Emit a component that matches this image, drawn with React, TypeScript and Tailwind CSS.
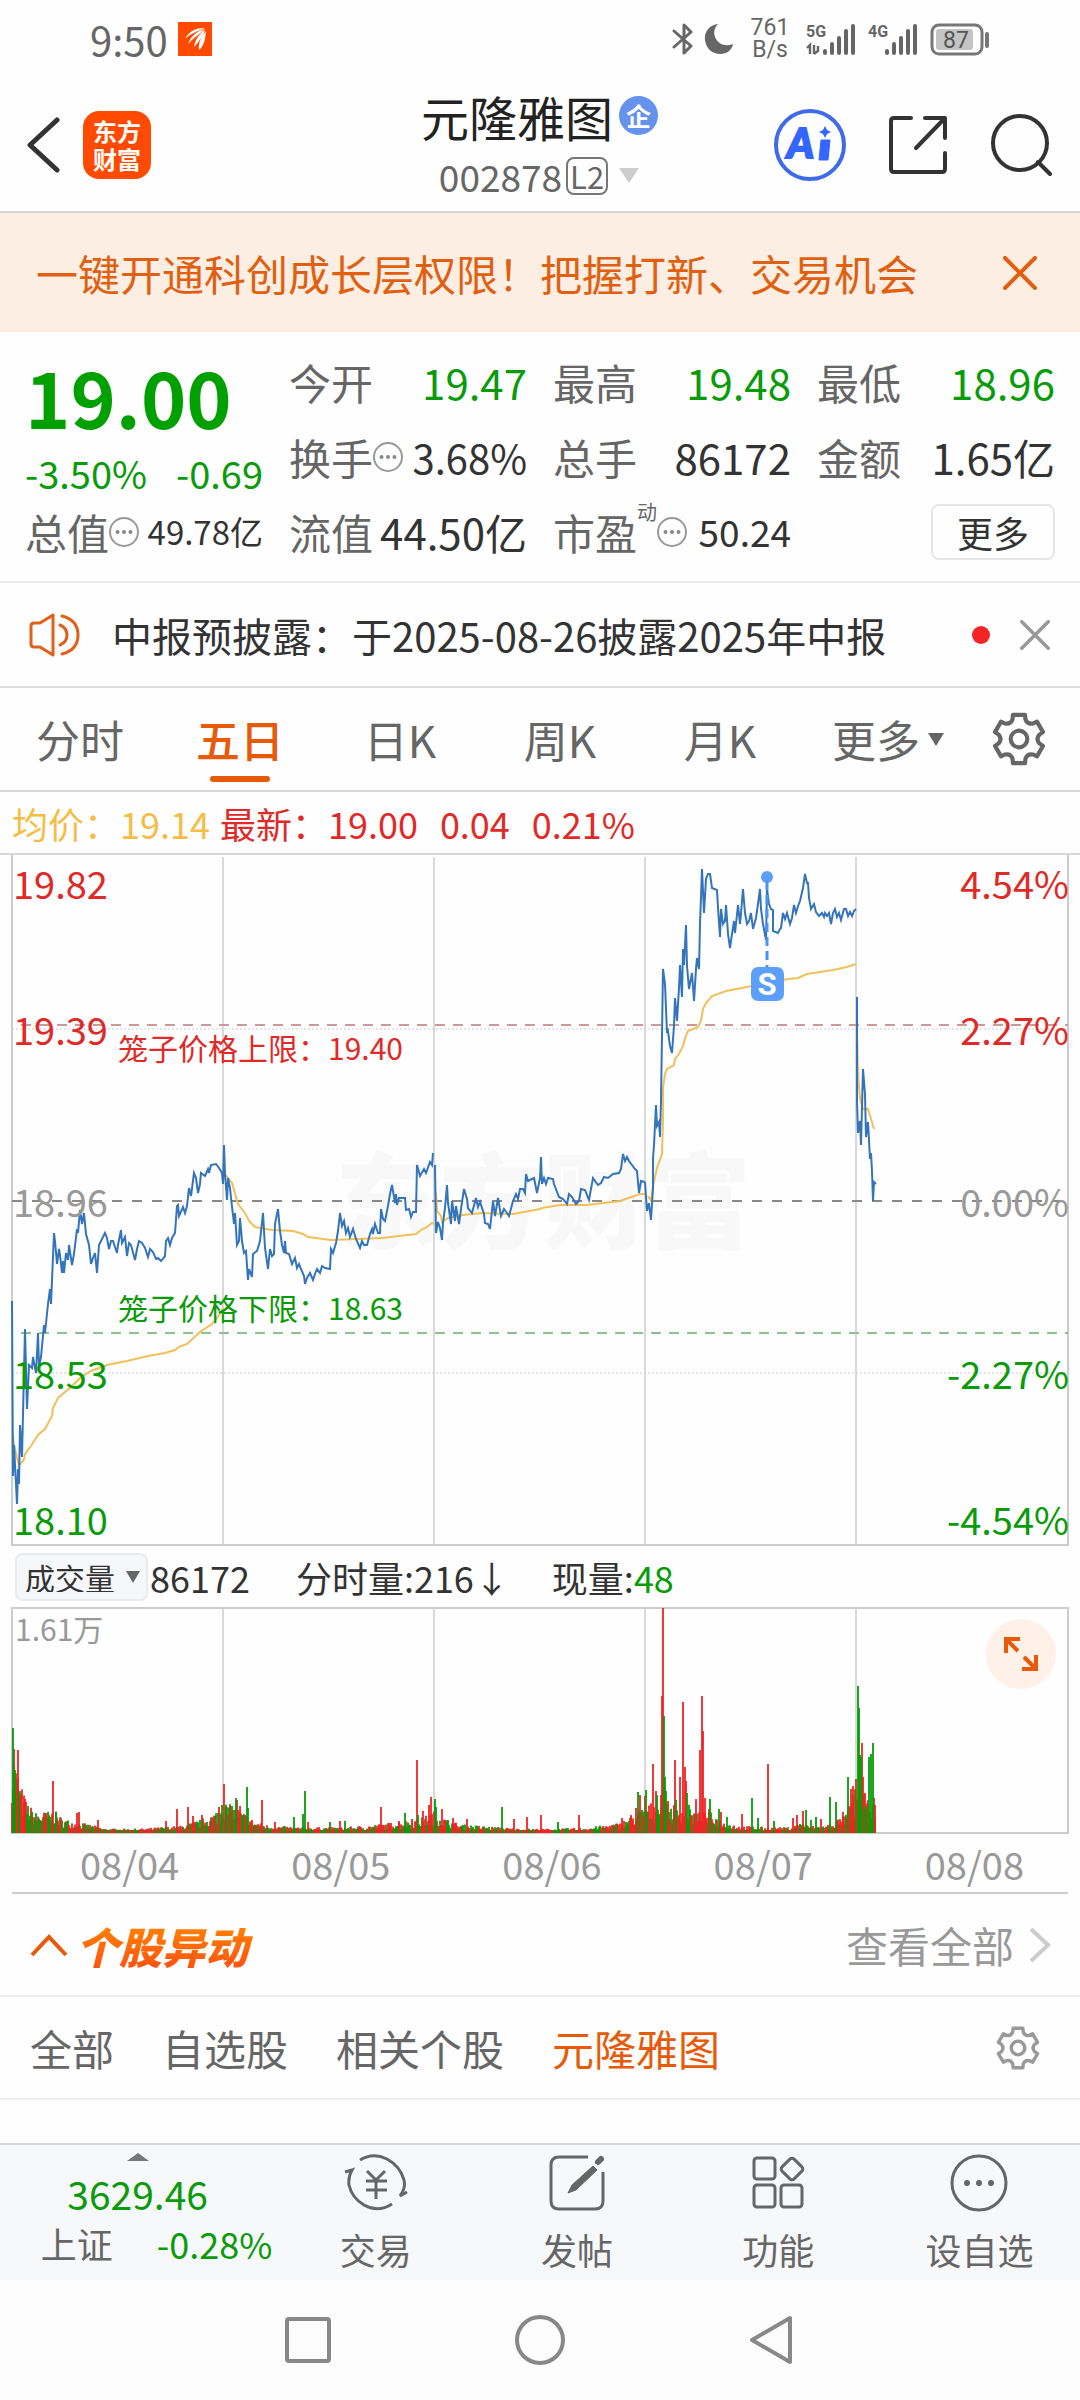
import { useState } from "react";

type Tone = "red" | "green";

const priceLine: string[] = [
  "12,446 13,621 14,590 17,649 18,614 19,629 20,570 22,602 25,474 27,554 29,510 32,513 33,502 36,518 38,478 39,511 41,502 44,470 45,478 48,449 50,434 51,449 54,378 55,386 57,409 59,394 60,400 62,418 63,406 64,418 66,398 68,405 69,390 72,410 74,399 77,374 78,378 80,355 82,369 84,358 86,379 89,390 91,409 93,403 95,398 97,418 99,390 101,386 105,378 107,383 109,394 111,386 113,386 117,398 118,390 121,375 122,388 125,382 127,401 129,388 131,390 135,405 137,394 139,386 142,388 145,393 148,402 150,394 153,397 156,404 158,403 161,406 165,401 166,386 168,383 170,390 172,383 175,378 177,351 178,350 179,361 183,352 185,358 187,351 189,333 191,341 194,318 196,323 198,338 200,329 201,318 205,321 208,314 209,318 211,310 216,309 219,313 222,318 223,329",
  "223,329 224,290 225,319 227,345 228,323 230,333 231,343 234,369 235,358 237,390 239,386 240,363 242,386 244,398 246,396 248,425 249,414 252,422 253,399 257,396 260,386 263,358 265,393 268,414 270,394 272,401 274,399 275,369 278,354 280,376 282,390 284,398 285,386 286,398 289,399 292,409 295,403 297,413 299,409 301,414 304,421 305,429 307,423 310,418 313,425 315,419 317,414 320,418 322,411 325,413 330,414 331,394 333,398 336,388 338,376 340,358 342,371 344,366 346,378 348,373 350,382 353,374 356,384 360,393 362,386 364,390 367,390 370,379 372,374 373,379 375,369 378,378 380,378 381,354 383,364 385,366 388,351 390,339 392,330 395,348 396,339 397,350 399,343 405,343 406,355 409,354 411,362 413,357 416,357 417,310 420,321 424,314 426,318 430,307 432,310 433,298",
  "435,310 436,378 438,367 440,373 442,385 443,368 445,353 447,330 448,348 451,369 452,346 455,366 456,351 459,369 461,354 464,334 467,344 468,353 472,358 476,343 478,352 480,347 484,359 485,368 488,369 490,374 493,346 495,361 498,343 501,361 504,354 507,358 509,361 513,346 516,339 518,344 520,334 523,334 525,338 526,319 528,326 534,323 537,338 540,323 541,302 542,329 544,323 546,329 548,323 553,324 554,329 559,342 563,344 567,349 569,339 572,342 576,349 579,346 581,334 585,335 589,345 593,323 595,326 598,330 601,328 604,322 608,323 613,319 619,318 621,314 623,299 625,306 627,302 629,306 632,310 635,314 637,316 639,338 641,326 645,327",
  "645,327 647,356 649,348 651,365 653,333 653,303 654,290 656,250 657,271 659,267 660,282 661,246 663,114 665,129 667,178 668,176 670,191 672,198 674,171 675,143 677,166 679,133 680,110 682,142 683,94 684,110 686,70 687,111 689,134 692,118 694,146 696,114 697,103 699,114 700,69 702,14 704,58 706,24 708,19 710,19 712,33 717,35 718,53 720,82 721,54 723,69 725,66 726,50 728,79 730,93 732,79 734,66 735,78 738,50 740,69 741,58 743,34 745,58 747,69 749,66 751,58 753,74 756,63 758,49 760,34 761,54 763,69 766,85 767,34 769,49 771,54 773,55 773,76 778,78 780,74 781,73 783,58 785,64 787,58 790,69 792,63 794,50 796,58 798,51 800,46 803,33 805,19 807,28 808,28 809,43 811,54 814,49 816,57 819,61 822,58 824,62 825,58 827,61 829,58 831,69 833,58 835,54 837,62 839,58 841,65 844,54 846,54 848,61 850,57 852,61 854,56 856,54",
  "857,142 857,246 858,278 860,266 861,290 863,214 865,239 866,282 868,267 870,304 871,298 872,316 873,346 874,327 876,329",
];

const averageLine: string[] = [
  "13,580 14,590 19,611 24,604 25,599 31,591 38,580 45,574 52,561 53,553 58,543 71,532 80,523 91,516 107,510 127,506 148,501 165,498 175,495 179,492 187,489 200,477 212,469 220,459 223,453",
  "224,318 232,328 238,349 245,358 249,366 255,372 272,375 293,376 303,379 308,382 331,385 382,383 416,379 421,375 427,372 432,368 434,369",
  "436,338 437,356 441,361 442,367 448,363 463,360 482,358 513,359 540,354 542,353 560,350 587,350 620,346 640,339 645,339",
  "648,341 651,346 653,331 657,313 662,299 663,266 663,233 665,219 667,214 674,210 675,204 679,199 683,191 685,183 688,176 698,172 701,166 703,154 706,148 712,141 726,136 747,132 767,128 788,124 798,123 807,119 833,115 847,112 856,109",
  "857,173 858,219 860,243 863,254 868,254 871,264 874,274",
];

// typical trading volume over time, [x, height]
const volumeBase: number[][] = [
  [12, 60], [20, 35], [26, 22], [35, 14], [55, 15], [62, 10], [75, 8], [95, 5],
  [105, 3], [140, 3], [160, 4], [180, 5], [200, 9], [215, 14], [222, 22],
  [240, 16], [255, 8], [270, 5], [300, 4], [340, 4], [365, 5], [390, 7],
  [420, 10], [435, 15], [445, 10], [460, 6], [480, 5], [520, 3], [560, 3],
  [590, 4], [620, 7], [640, 16], [655, 22], [665, 20], [680, 18], [700, 14],
  [712, 14], [722, 8], [740, 5], [770, 4], [790, 4], [803, 8], [808, 5],
  [825, 5], [845, 12], [855, 30], [863, 30], [868, 22], [875, 24],
];

const redPeaks =
  "14,84 18,83 24,30 25,34 46,20 53,52 77,20 79,21 98,13 166,12 177,24 188,26 193,17 202,18 219,26 224,49 230,27 237,33 240,27 262,33 275,11 308,11 340,12 381,26 399,12 412,14 417,73 423,22 429,28 431,36 442,24 453,15 467,14 514,14 527,16 541,18 579,18 622,15 631,18 636,25 640,38 645,37 653,69 656,42 661,38 662,137 663,225 668,32 674,28 675,73 680,56 683,131 685,66 686,52 696,34 700,83 702,137 703,102 705,35 709,24 721,21 742,19 768,69 793,15 797,18 803,22 821,14 843,21 851,44 853,47 856,54 862,90 863,56 875,28";
const greenPeaks =
  "13,105 15,63 19,40 32,21 56,21 222,28 226,26 232,27 236,35 247,46 248,25 294,16 303,19 305,42 330,11 345,12 405,20 418,18 435,34 436,26 502,26 558,11 638,41 646,43 657,38 664,117 665,56 666,42 676,33 687,40 689,28 710,34 719,24 727,16 752,35 758,15 774,12 806,23 811,13 816,16 830,36 836,31 848,56 858,147 859,125 860,78 861,76 864,24 866,27 869,76 871,79 873,90";

const parsePeaks = (list: string, tone: Tone) =>
  list.split(" ").map((item) => {
    const [x, h] = item.split(",").map(Number);
    return { x, h, tone };
  });

const baseHeight = (x: number) => {
  const i = volumeBase.findIndex((p) => p[0] >= x);
  if (i <= 0) return volumeBase[0][1];
  const [x0, h0] = volumeBase[i - 1];
  const [x1, h1] = volumeBase[i];
  return h0 + ((h1 - h0) * (x - x0)) / (x1 - x0);
};

const buildVolume = () => {
  const bars: { x: number; h: number; tone: Tone }[] = [];
  let seed = 7;
  const next = () => {
    seed = (seed * 16807) % 2147483647;
    return seed / 2147483647;
  };
  for (let x = 12; x <= 875; x++) {
    const h = Math.max(3, baseHeight(x) * (0.5 + next()));
    bars.push({ x, h, tone: next() > 0.45 ? "red" : "green" });
  }
  return [
    ...bars,
    ...parsePeaks(redPeaks, "red"),
    ...parsePeaks(greenPeaks, "green"),
  ];
};

const volumeBars = buildVolume();

const gearPath = () => {
  const at = (deg: number, r: number) => {
    const a = (deg * Math.PI) / 180;
    return `${(26 + r * Math.cos(a)).toFixed(1)} ${(26 + r * Math.sin(a)).toFixed(1)}`;
  };
  let d = "";
  for (let k = 0; k < 6; k++) {
    const c = -90 + k * 60;
    d += `${k === 0 ? "M" : "L"}${at(c - 14, 24)} L${at(c + 14, 24)} L${at(c + 18, 20)} Q${at(c + 30, 16)} ${at(c + 42, 20)} `;
  }
  return d + "Z";
};

const Gear = ({ className, width }: { className: string; width: number }) => (
  <svg viewBox="0 0 52 52" className={className} fill="none" stroke="currentColor" strokeWidth={width} strokeLinejoin="round">
    <path d={gearPath()} />
    <circle cx="26" cy="26" r="8" />
  </svg>
);

const Cross = ({ className }: { className: string }) => (
  <svg viewBox="0 0 34 34" className={className} stroke="currentColor" strokeWidth="4" strokeLinecap="round">
    <path d="M2 2 32 32M32 2 2 32" />
  </svg>
);

const Dots = () => (
  <svg viewBox="0 0 30 30" className="h-[30px] w-[30px] shrink-0" fill="none" stroke="#999" strokeWidth="2">
    <circle cx="15" cy="15" r="14" />
    <g fill="#888" stroke="none">
      <circle cx="8.500" cy="15" r="2" />
      <circle cx="15" cy="15" r="2" />
      <circle cx="21.500" cy="15" r="2" />
    </g>
  </svg>
);

const Signal = ({ label, data }: { label: string; data?: boolean }) => (
  <svg viewBox="0 0 50 34" className="h-[34px] w-[50px]">
    <text x="0" y="15" fontSize="16" fontWeight="700" fontFamily="Liberation Sans Narrow, Roboto, sans-serif" fill="#666">
      {label}
    </text>
    {data && (
      <path d="M1 26 4 23V32M8 23v9M12 24v5l-4 3" stroke="#666" strokeWidth="2.400" fill="none" />
    )}
    <path d="M19 29v2M26 22v9M33 16v15M40 9v22M47 4v27" stroke="#666" strokeWidth="4" strokeLinecap="round" />
  </svg>
);

const StatusBar = () => (
  <div className="flex h-[78px] items-center justify-between pl-[90px] pr-[90px] text-[#666]">
    <div className="flex items-center gap-2.5">
      <span className="text-[40px] leading-none">9:50</span>
      <svg viewBox="0 0 34 34" className="h-[34px] w-[34px]">
        <rect width="34" height="34" fill="#ff4a00" />
        <path d="M7 17C11 9 18 6 27 6 20 9 12 12 7 17ZM10 22C13 14 19 9 27 7 21 13 15 16 10 22ZM16 25C17 18 21 12 27 8 24 15 21 20 16 25ZM21 28C20 20 24 13 28 9 27 18 26 24 21 28Z" fill="#fff" />
      </svg>
    </div>
    <div className="flex items-center">
      <svg viewBox="0 0 22 34" className="h-[34px] w-[22px]" fill="none" stroke="#666" strokeWidth="3" strokeLinejoin="round" strokeLinecap="round">
        <path d="M2 9 19 24 12 31V3L19 10 2 25" />
      </svg>
      <svg viewBox="0 0 30 32" className="ml-2.5 h-[32px] w-[30px]">
        <path d="M13 1C4 3 0 10 1 17 2 26 9 31 16 31 23 31 28 27 29 21 21 24 15 21 12 16 9 11 10 5 14 1Z" fill="#666" />
      </svg>
      <div className="ml-4 w-[40px] text-center font-[Roboto,sans-serif] text-[23px] leading-[22px]">
        761
        <br />
        B/s
      </div>
      <div className="ml-4 flex gap-3">
        <Signal label="5G" data />
        <Signal label="4G" />
      </div>
      <svg viewBox="0 0 60 34" className="ml-3 h-[34px] w-[60px]">
        <rect x="2" y="3" width="50" height="29" rx="7" fill="none" stroke="#777" strokeWidth="3" />
        <rect x="6" y="7" width="37" height="21" rx="3" fill="#c4c4c4" />
        <text x="26" y="26" fontSize="23" textAnchor="middle" fontFamily="Roboto, sans-serif" fill="#555">
          87
        </text>
        <rect x="55" y="10" width="4" height="16" rx="2" fill="#777" />
      </svg>
    </div>
  </div>
);

const Header = () => (
  <header className="grid h-[135px] grid-cols-[1fr_auto_1fr] items-center border-b-2 border-[#d8d8d8] pl-[27px] pr-[28px]">
    <div className="flex items-center gap-5">
      <button aria-label="返回">
        <svg viewBox="0 0 36 56" className="h-[56px] w-[36px]" fill="none" stroke="#333" strokeWidth="5" strokeLinecap="round" strokeLinejoin="round">
          <path d="M30 3 3 28 30 53" />
        </svg>
      </button>
      <div className="h-[68px] w-[68px] rounded-2xl bg-[#ff4a00] pt-1.5 text-center text-[24px] font-bold leading-[28px] text-white">
        东方
        <br />
        财富
      </div>
    </div>
    <div className="flex flex-col items-center">
      <div className="flex items-center gap-1.5">
        <h1 className="text-[48px] leading-[60px] text-[#222]">元隆雅图</h1>
        <span className="flex h-[39px] w-[39px] items-center justify-center rounded-full bg-[#6592ec] text-[25px] font-bold leading-none text-white">
          企
        </span>
      </div>
      <div className="flex items-center pt-0.5 text-[37px] leading-[56px] text-[#666]">
        <span>002878</span>
        <span className="ml-1 rounded-lg border-2 border-[#777] px-0.5 text-[31px] leading-[34px]">L2</span>
        <svg viewBox="0 0 22 15" className="ml-2.5 h-[15px] w-[22px]">
          <path d="M1 0H21L11 15Z" fill="#ccc" />
        </svg>
      </div>
    </div>
    <div className="flex items-center justify-end gap-[42px]">
      <button aria-label="Ai">
        <svg viewBox="0 0 72 72" className="h-[72px] w-[72px]">
          <circle cx="36" cy="36" r="34" fill="none" stroke="#3f6ae8" strokeWidth="4" />
          <text x="13" y="49" fontSize="41" fontWeight="900" fontStyle="italic" fontFamily="Lato, sans-serif" fill="#3366ff" stroke="#3366ff" strokeWidth="2">
            A
          </text>
          <path d="M47 31H56L54 51H45Z" fill="#3366ff" stroke="#3366ff" strokeWidth="1" />
          <path d="M51 17 53 21 57 23 53 25 51 29 49 25 45 23 49 21Z" fill="#3366ff" />
        </svg>
      </button>
      <button aria-label="分享">
        <svg viewBox="0 0 60 60" className="h-[60px] w-[60px]" fill="none" stroke="#333" strokeWidth="4" strokeLinecap="round" strokeLinejoin="round">
          <path d="M23 3H6Q3 3 3 6V54Q3 57 6 57H54Q57 57 57 54V38M37 3H57V23M57 3 28 33" />
        </svg>
      </button>
      <button aria-label="搜索">
        <svg viewBox="0 0 62 62" className="h-[62px] w-[62px]" fill="none" stroke="#333" strokeWidth="4" strokeLinecap="round">
          <circle cx="30" cy="29" r="27" />
          <path d="M48 48 60 60" />
        </svg>
      </button>
    </div>
  </header>
);

const Stat = ({ label, value, green, dots }: { label: string; value: string; green?: boolean; dots?: boolean }) => (
  <div className="flex items-center whitespace-nowrap">
    <span className="text-[42px] text-[#666]">{label}</span>
    {dots && <Dots />}
    <span className={`ml-auto ${dots ? "text-[40px]" : "text-[42px]"} ${green ? "text-[#0a9b0a]" : "text-[#333]"}`}>
      {value}
    </span>
  </div>
);

const Quote = () => (
  <section className="grid grid-cols-4 grid-rows-[75px_75px_75px] gap-x-[26px] border-b-2 border-[#ececec] px-[25px] pb-3 pt-3 leading-none">
    <div className="row-span-2 flex flex-col text-[#0a9b0a]">
      <span className="mt-2 text-[77px] font-bold leading-[88px] text-[#00a000]">19.00</span>
      <div className="mt-3.5 flex justify-between whitespace-nowrap text-[38px]">
        <span>-3.50%</span>
        <span>-0.69</span>
      </div>
    </div>
    <Stat label="今开" value="19.47" green />
    <Stat label="最高" value="19.48" green />
    <Stat label="最低" value="18.96" green />
    <Stat label="换手" value="3.68%" dots />
    <Stat label="总手" value="86172" />
    <Stat label="金额" value="1.65亿" />
    <div className="flex items-center whitespace-nowrap">
      <span className="text-[42px] text-[#666]">总值</span>
      <Dots />
      <span className="ml-auto text-[33px] text-[#333]">49.78亿</span>
    </div>
    <Stat label="流值" value="44.50亿" />
    <div className="flex items-center whitespace-nowrap">
      <span className="text-[42px] text-[#666]">市盈</span>
      <span className="self-start pt-2 text-[20px] text-[#666]">动</span>
      <Dots />
      <span className="ml-auto text-[37px] text-[#333]">50.24</span>
    </div>
    <div className="flex items-center justify-end">
      <button className="h-[56px] w-[124px] rounded-lg border-2 border-[#e6e6e6] text-[36px] leading-none text-[#333]">
        更多
      </button>
    </div>
  </section>
);

const Notice = () => (
  <div className="flex h-[105px] items-center border-b-2 border-[#dcdcdc] pl-[29px] pr-[30px]">
    <svg viewBox="0 0 52 44" className="h-[44px] w-[52px]" fill="none" stroke="#e0601a" strokeWidth="3" strokeLinejoin="round" strokeLinecap="round">
      <path d="M24 2V42L11 34H5Q2 34 2 31V13Q2 10 5 10H11Z" />
      <path d="M31 12Q38 15 38 22T31 32M33 3Q49 7 49 22T33 41" />
    </svg>
    <a href="#notice" className="ml-[31px] whitespace-nowrap text-[40px] leading-none text-[#333]">
      中报预披露：于2025-08-26披露2025年中报
    </a>
    <span className="ml-auto h-[18px] w-[18px] rounded-full bg-[#f22424]"></span>
    <button aria-label="关闭公告" className="ml-[30px] text-[#999]">
      <Cross className="h-[30px] w-[30px]" />
    </button>
  </div>
);

const periods = ["分时", "五日", "日K", "周K", "月K"];

const Tabs = () => {
  const [active, setActive] = useState("五日");
  return (
    <nav className="flex h-[104px] border-b-2 border-[#d8d8d8] text-[44px] leading-none text-[#666]">
      {periods.map((item) => (
        <button
          key={item}
          onClick={() => setActive(item)}
          className={`relative flex-[160] ${active === item ? "font-medium text-[#e65a0a]" : ""}`}
        >
          {item}
          {active === item && (
            <span className="absolute bottom-2 left-1/2 h-[6px] w-[60px] -translate-x-1/2 rounded-full bg-[#e65a0a]"></span>
          )}
        </button>
      ))}
      <button className="flex flex-[176] items-center justify-center gap-2">
        更多
        <svg viewBox="0 0 16 13" className="h-[13px] w-[16px]">
          <path d="M0 0H16L8 13Z" fill="#666" />
        </svg>
      </button>
      <button aria-label="图表设置" className="flex flex-[104] items-center">
        <Gear className="ml-4 h-[54px] w-[54px]" width={4} />
      </button>
    </nav>
  );
};

const columns = [223, 434, 645, 856];

const axisLabels = [
  { y: 44, price: "19.82", rate: "4.54%", color: "#e02a28" },
  { y: 190, price: "19.39", rate: "2.27%", color: "#e02a28" },
  { y: 362, price: "18.96", rate: "0.00%", color: "#999" },
  { y: 534, price: "18.53", rate: "-2.27%", color: "#0a9b0a" },
  { y: 680, price: "18.10", rate: "-4.54%", color: "#0a9b0a" },
];

const PriceChart = () => (
  <svg viewBox="0 0 1080 692" className="block w-full" fill="none">
    <text x="543" y="386" fontSize="104" fontWeight="900" textAnchor="middle" fill="#f8f8f8">
      东方财富
    </text>
    <g stroke="#ccc" strokeWidth="2">
      <path d="M12 0V690H1068V0" />
      {columns.map((x) => (
        <path key={x} d={`M${x} 2V690`} strokeWidth="1.500" />
      ))}
      <path d="M12 174H1068M12 518H1068" strokeWidth="1" strokeDasharray="2 2" />
    </g>
    <path d="M12 346H1068" stroke="#888" strokeWidth="2" strokeDasharray="10 10" />
    <path d="M21 170H1068" stroke="#cc9999" strokeWidth="2" strokeDasharray="10 8" />
    <path d="M21 478H1068" stroke="#8fc08f" strokeWidth="2" strokeDasharray="10 8" />
    {averageLine.map((points, index) => (
      <polyline key={index} points={points} stroke="#f0c05a" strokeWidth="2" />
    ))}
    {priceLine.map((points, index) => (
      <polyline key={index} points={points} stroke="#3474ba" strokeWidth="2" />
    ))}
    <circle cx="767" cy="22" r="6" fill="#5b9ff8" />
    <path d="M767 26V112" stroke="#4a92f5" strokeWidth="3" strokeDasharray="9 5" />
    <rect x="751" y="112" width="33" height="34" rx="7" fill="#5b9ff8" />
    <text x="767" y="140" fontSize="31" fontWeight="700" textAnchor="middle" fontFamily="Roboto, sans-serif" fill="#fff">
      S
    </text>
    <text x="118" y="205" fontSize="30" fill="#e02a28">
      笼子价格上限：19.40
    </text>
    <text x="118" y="465" fontSize="30" fill="#0a9b0a">
      笼子价格下限：18.63
    </text>
    {axisLabels.map((item) => (
      <g key={item.price} fontSize="38" fill={item.color}>
        <text x="13" y={item.y}>{item.price}</text>
        <text x="1069" y={item.y} textAnchor="end">{item.rate}</text>
      </g>
    ))}
  </svg>
);

const VolumeChart = () => (
  <div className="relative">
    <svg viewBox="0 0 1080 228" className="block w-full" fill="none">
      <path d="M12 1H1068V226H12Z" stroke="#ccc" strokeWidth="2" />
      {columns.map((x) => (
        <path key={x} d={`M${x} 1V226`} stroke="#ccc" strokeWidth="1.500" />
      ))}
      {volumeBars.map((bar, index) => (
        <rect
          key={index}
          x={bar.x - 1}
          y={226 - bar.h}
          width="2"
          height={bar.h}
          fill={bar.tone === "red" ? "#ee2424" : "#069c06"}
          fillOpacity="0.900"
        />
      ))}
      <text x="15" y="34" fontSize="30" fill="#999">
        1.61万
      </text>
    </svg>
    <button
      aria-label="全屏"
      className="absolute right-6 top-3 flex h-[70px] w-[70px] items-center justify-center rounded-full bg-[#fff1e8]"
    >
      <svg viewBox="0 0 34 34" className="h-[34px] w-[34px]" fill="none" stroke="#e65a0a" strokeWidth="4">
        <path d="M2 16V2H16M2 2 14 14M32 18V32H18M32 32 20 20" />
      </svg>
    </button>
  </div>
);

const days = ["08/04", "08/05", "08/06", "08/07", "08/08"];

const Chart = () => (
  <section>
    <div className="flex h-[63px] items-center whitespace-nowrap border-b-2 border-[#d8d8d8] pl-[12px] text-[36px] leading-none text-[#e02a28]">
      <span className="text-[#f5bd45]">均价：19.14</span>
      <span className="ml-2.5">最新：19.00</span>
      <span className="ml-[22px]">0.04</span>
      <span className="ml-[22px]">0.21%</span>
    </div>
    <PriceChart />
    <div className="flex h-[60px] items-center whitespace-nowrap pl-[15px] text-[36px] leading-none text-[#333]">
      <div className="relative">
        <select
          aria-label="指标"
          className="h-[48px] w-[133px] appearance-none rounded-lg border-2 border-[#e9ebef] bg-[#f6f7fa] pl-2 text-[30px] leading-none"
        >
          <option>成交量</option>
        </select>
        <svg viewBox="0 0 14 12" className="pointer-events-none absolute right-2 top-[18px] h-[12px] w-[14px]">
          <path d="M0 0H14L7 12Z" fill="#666" />
        </svg>
      </div>
      <span className="ml-0.5">86172</span>
      <span className="ml-[46px]">分时量:216↓</span>
      <span className="ml-[42px]">
        现量:<span className="text-[#0a9b0a]">48</span>
      </span>
    </div>
    <VolumeChart />
    <div className="mx-3 grid h-[59px] grid-cols-5 items-center border-b-2 border-[#ccc] text-center text-[38px] leading-none text-[#999]">
      {days.map((day) => (
        <span key={day} className="pl-6">{day}</span>
      ))}
    </div>
  </section>
);

const filters = ["全部", "自选股", "相关个股", "元隆雅图"];

const Moves = () => {
  const [filter, setFilter] = useState("元隆雅图");
  return (
    <section>
      <div className="flex h-[103px] items-center border-b-2 border-[#eee] pl-[30px] pr-[28px] leading-none">
        <svg viewBox="0 0 38 24" className="h-[24px] w-[38px]" fill="none" stroke="#e65a0a" strokeWidth="4">
          <path d="M2 22 19 4 36 22" />
        </svg>
        <h2 className="ml-2 bg-gradient-to-b from-[#ff8a00] to-[#ff4a10] bg-clip-text pr-2 text-[43px] font-black italic leading-[56px] text-transparent">
          个股异动
        </h2>
        <a href="#all" className="ml-auto flex items-center gap-3.5 text-[42px] text-[#999]">
          查看全部
          <svg viewBox="0 0 24 36" className="h-[36px] w-[24px]" fill="none" stroke="#ccc" strokeWidth="4">
            <path d="M3 2 20 18 3 34" />
          </svg>
        </a>
      </div>
      <div className="flex h-[103px] items-center gap-12 border-b-2 border-[#eee] pl-[30px] pr-[40px] text-[42px] leading-none text-[#666]">
        {filters.map((item) => (
          <button key={item} onClick={() => setFilter(item)} className={filter === item ? "text-[#e65a0a]" : ""}>
            {item}
          </button>
        ))}
        <button aria-label="异动设置" className="ml-auto text-[#999]">
          <Gear className="h-[44px] w-[44px]" width={4} />
        </button>
      </div>
    </section>
  );
};

const actions = [
  {
    name: "交易",
    icon: (
      <>
        <path d="M16 7Q29 -1 43 6 56 13 60 27 62 35 56 43L63 39M48 51Q34 60 20 52 8 45 5 32 4 24 8 17L1 19" />
        <path d="M23 18 32 27 41 18M22 28H43M22 37H43M32 27V46" />
      </>
    ),
  },
  {
    name: "发帖",
    icon: (
      <>
        <path d="M43 4H14Q6 4 6 12V48Q6 56 14 56H50Q58 56 58 48V19" />
        <path d="M48 13 52 17 31 37 23 40 27 32Z" fill="currentColor" strokeWidth="1" />
        <path d="M53 9 56 6" strokeWidth="6" strokeLinecap="round" />
      </>
    ),
  },
  {
    name: "功能",
    icon: (
      <>
        <rect x="8" y="5" width="21" height="21" rx="3" />
        <rect x="8" y="32" width="21" height="22" rx="3" />
        <rect x="35" y="32" width="21" height="22" rx="3" />
        <rect x="37.500" y="7.500" width="17" height="17" rx="3" transform="rotate(45 46 16)" />
      </>
    ),
  },
  {
    name: "设自选",
    icon: (
      <>
        <circle cx="32" cy="30" r="27" />
        <g fill="currentColor" stroke="none">
          <circle cx="20" cy="30" r="3" />
          <circle cx="32" cy="30" r="3" />
          <circle cx="44" cy="30" r="3" />
        </g>
      </>
    ),
  },
];

const BottomBar = () => (
  <footer className="mt-auto">
    <div className="flex h-[137px] border-t-2 border-[#d4d6da] bg-[#f7f8fa] leading-none text-[#666]">
      <button className="flex flex-[275] flex-col items-center pt-2">
        <svg viewBox="0 0 22 8" className="h-[8px] w-[22px]">
          <path d="M0 8 11 0 22 8Z" fill="#777" />
        </svg>
        <span className="mt-2.5 text-[39px] leading-[44px] text-[#0a9b0a]">3629.46</span>
        <span className="mt-1.5 flex items-center gap-11 pl-[38px] text-[36px] leading-[44px]">
          <span className="whitespace-nowrap">上证</span>
          <span className="text-[#0a9b0a]">-0.28%</span>
        </span>
      </button>
      {actions.map((action) => (
        <button key={action.name} className="flex flex-[201] flex-col items-center pt-2 text-[36px]">
          <svg viewBox="0 0 64 60" className="h-[60px] w-[64px]" fill="none" stroke="currentColor" strokeWidth="3">
            {action.icon}
          </svg>
          <span className="mt-4 leading-[40px]">{action.name}</span>
        </button>
      ))}
    </div>
    <div className="flex h-[120px] items-center justify-center gap-[184px] bg-[#fcfcfc] text-[#888]">
      <button aria-label="最近任务">
        <svg viewBox="0 0 46 46" className="h-[46px] w-[46px]" fill="none" stroke="currentColor" strokeWidth="4">
          <rect x="2" y="2" width="42" height="42" rx="2" />
        </svg>
      </button>
      <button aria-label="主页">
        <svg viewBox="0 0 50 50" className="h-[50px] w-[50px]" fill="none" stroke="currentColor" strokeWidth="4">
          <circle cx="25" cy="25" r="23" />
        </svg>
      </button>
      <button aria-label="后退">
        <svg viewBox="0 0 46 50" className="h-[50px] w-[46px]" fill="none" stroke="currentColor" strokeWidth="4" strokeLinejoin="round">
          <path d="M41 3V47L3 25Z" />
        </svg>
      </button>
    </div>
  </footer>
);

const App = () => {
  const [showBanner, setShowBanner] = useState(true);
  return (
    <div className="flex min-h-screen flex-col bg-[#fefefe] font-['Noto_Sans_CJK_SC',sans-serif]">
      <StatusBar />
      <Header />
      {showBanner && (
        <div className="flex h-[119px] items-center justify-between bg-[#fdeee4] pl-[36px] pr-[43px] text-[#e0600f]">
          <p className="whitespace-nowrap text-[42px] leading-none">一键开通科创成长层权限！把握打新、交易机会</p>
          <button aria-label="关闭" onClick={() => setShowBanner(false)}>
            <Cross className="h-[34px] w-[34px]" />
          </button>
        </div>
      )}
      <Quote />
      <Notice />
      <Tabs />
      <Chart />
      <Moves />
      <BottomBar />
    </div>
  );
};

export default App;
